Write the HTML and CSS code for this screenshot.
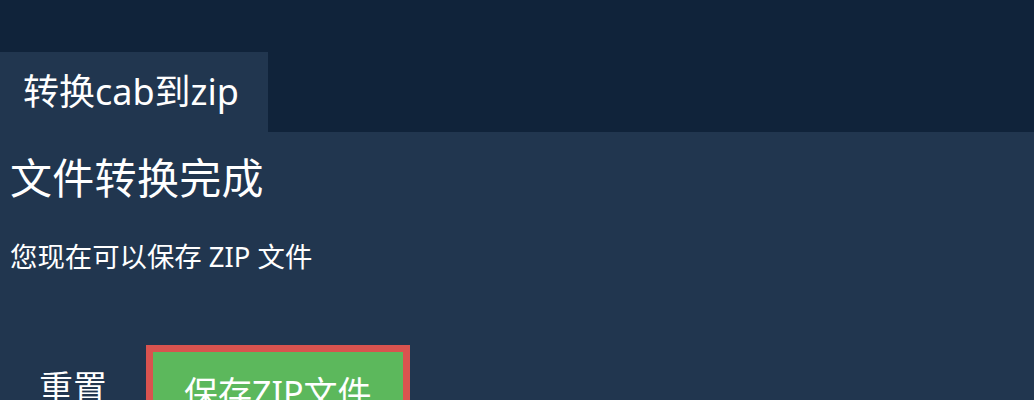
FILE: index.html
```html
<!DOCTYPE html>
<html lang="zh">
<head>
<meta charset="utf-8">
<title>转换cab到zip</title>
<link rel="stylesheet" href="styles.css">
</head>
<body>
<header class="topbar"></header>
<nav class="tabs">
  <div class="tab">转换cab到zip</div>
</nav>
<main class="content">
  <h1 class="title">文件转换完成</h1>
  <p class="subtitle">您现在可以保存 ZIP 文件</p>
  <div class="actions">
    <button class="btn btn-reset">重置</button>
    <button class="btn btn-save">保存ZIP文件</button>
  </div>
</main>
</body>
</html>
```

FILE: styles.css
```css
html, body {
  margin: 0;
  padding: 0;
}
body {
  background: #21364f;
  color: #ffffff;
  font-family: "Noto Sans", "Noto Sans CJK SC", sans-serif;
  height: 400px;
  overflow: hidden;
}
.topbar {
  height: 52px;
  background: #10233a;
}
.tabs {
  display: flex;
  height: 80px;
  background: #10233a;
}
.tab {
  width: 268px;
  box-sizing: border-box;
  background: #21364f;
  padding-left: 23px;
  font-size: 36px;
  line-height: 80px;
  white-space: nowrap;
}
.content {
  padding: 0 0 0 10px;
}
.title {
  margin: 21px 0 0 0;
  font-size: 42px;
  line-height: 50px;
  font-weight: 400;
  letter-spacing: 0.3px;
}
.subtitle {
  margin: 36px 0 0 0;
  font-size: 27.4px;
  line-height: 36px;
}
.actions {
  display: flex;
  align-items: flex-start;
  gap: 10px;
  margin-top: 70px;
}
.btn {
  font-family: inherit;
  font-size: 34px;
  line-height: 40px;
  color: #ffffff;
  cursor: pointer;
  white-space: nowrap;
}
.btn-reset {
  background: transparent;
  border: none;
  padding: 22px 29px;
}
.btn-save {
  background: #5cb85c;
  border: 7px solid #d9534f;
  padding: 21px 31px;
}
```
